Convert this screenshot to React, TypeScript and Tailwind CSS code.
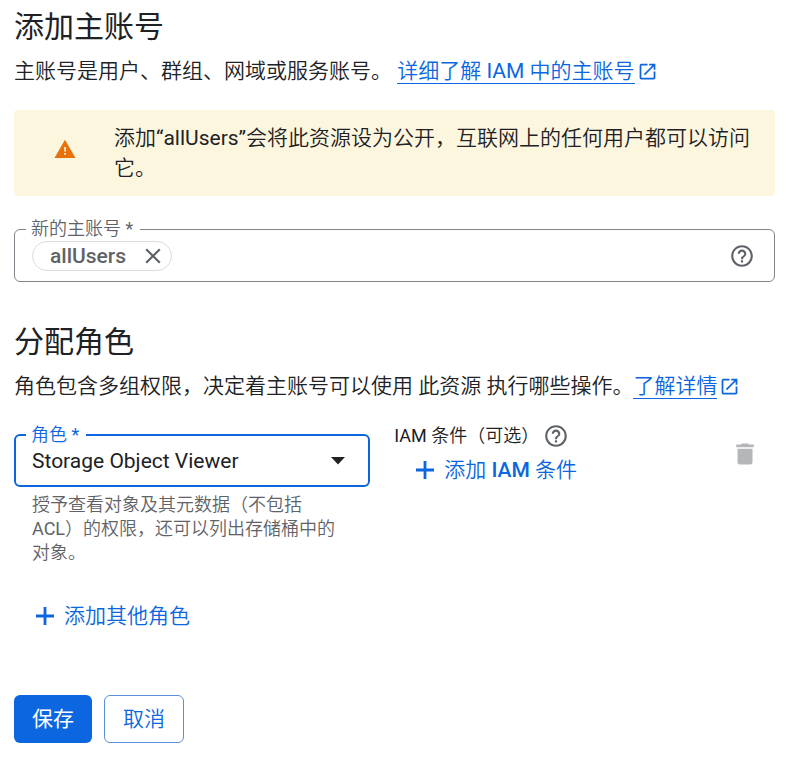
import { useState } from "react"
import { MdClose, MdHelpOutline, MdOpenInNew } from "react-icons/md"

function PlusIcon() {
  return (
    <svg width="18" height="18" viewBox="0 0 18 18" fill="currentColor" aria-hidden="true">
      <path d="M7.6 0h2.8v7.6H18v2.8h-7.6V18H7.6v-7.6H0V7.6h7.6z" />
    </svg>
  )
}

function TrashIcon() {
  return (
    <svg width="18" height="22" viewBox="0 0 18 22" fill="currentColor" aria-hidden="true">
      <path d="M6 .5h6l1 1h4.8v2.7H.2V1.500H5z" />
      <path d="M1.500 5.700h15v13.300a2.500 2.500 0 0 1-2.500 2.500H4a2.500 2.500 0 0 1-2.500-2.500z" />
    </svg>
  )
}

function WarningIcon() {
  return (
    <svg width="22" height="20" viewBox="0 0 22 20" aria-hidden="true">
      <path d="M11 .8 21.500 19H.5z" fill="#e8710a" />
      <path d="M10.200 8h1.700v4.500h-1.700zM10.200 14h1.700v1.700h-1.700z" fill="#fef7e0" />
    </svg>
  )
}

function DocLink({ children }: { children: string }) {
  return (
    <a href="#" className="inline-flex items-center gap-0.5 text-[#0b66e0]">
      <span className="border-b border-current leading-6">{children}</span>
      <MdOpenInNew size={21} />
    </a>
  )
}

export default function App() {
  const [members, setMembers] = useState(["allUsers"])

  return (
    <main className="bg-white pt-[9px] pb-4 pl-3.5 pr-4 font-['Roboto','Noto_Sans_CJK_SC_DemiLight','Noto_Sans_CJK_SC',sans-serif] text-[21px] leading-[30px] text-[#202124]">
      <form onSubmit={(e) => e.preventDefault()}>
        <h1 className="font-['Roboto','Noto_Sans_CJK_SC',sans-serif] text-[30px] leading-9">添加主账号</h1>
        <p className="mt-[11px]">
          主账号是用户、群组、网域或服务账号。 <DocLink>详细了解 IAM 中的主账号</DocLink>
        </p>

        <div role="alert" className="mt-6 flex rounded bg-[#fdf6df] py-[13px] pl-10 pr-6">
          <div className="w-[60px] shrink-0 pt-4">
            <WarningIcon />
          </div>
          <p>添加“allUsers”会将此资源设为公开，互联网上的任何用户都可以访问它。</p>
        </div>

        {/* Principals */}
        <fieldset className="mt-6 rounded-md border border-[#80868b] px-[11px] pb-[10px]">
          <legend className="pl-[5px] pr-[7px] text-[18px] leading-none text-[#5f6368]">
            <label htmlFor="members">新的主账号 *</label>
          </legend>
          <div className="flex items-center gap-2 pt-[3px] pl-[6px] pr-2">
            {members.map((name) => (
              <span key={name} className="flex h-[30px] items-center gap-3.5 rounded-full border border-[#dadce0] pl-[17px] pr-[5px] font-medium text-[#5f6368]">
                {name}
                <button type="button" aria-label={`移除 ${name}`} onClick={() => setMembers(members.filter((m) => m !== name))}>
                  <MdClose size={26} />
                </button>
              </span>
            ))}
            <input id="members" className="h-[30px] min-w-0 flex-1 outline-none" />
            <button type="button" aria-label="帮助" className="text-[#5f6368]">
              <MdHelpOutline size={26} />
            </button>
          </div>
        </fieldset>

        <h2 className="mt-[42px] font-['Roboto','Noto_Sans_CJK_SC',sans-serif] text-[30px] leading-9">分配角色</h2>
        <p className="mt-[11px]">
          角色包含多组权限，决定着主账号可以使用 此资源 执行哪些操作。<DocLink>了解详情</DocLink>
        </p>

        <div className="mt-[25px] grid grid-cols-[15fr_13fr_auto] gap-x-6">
          <div>
            <fieldset className="rounded-md border-2 border-[#0b66e0] px-[10px] pb-[7px]">
              <legend className="pl-[5px] pr-[7px] text-[18px] leading-none text-[#0b66e0]">
                <label htmlFor="role">角色 *</label>
              </legend>
              <div className="grid items-center">
                <select id="role" className="col-start-1 row-start-1 h-[34px] w-full appearance-none bg-transparent px-[6px] outline-none">
                  <option>Storage Object Viewer</option>
                </select>
                <svg width="16" height="8" viewBox="0 0 16 8" className="pointer-events-none col-start-1 row-start-1 mr-3 justify-self-end" aria-hidden="true">
                  <path d="M1 0h14L8 7.500z" fill="#202124" />
                </svg>
              </div>
            </fieldset>
            <p className="mt-[6px] pl-[18px] pr-6 text-[18px] leading-6 text-[#5f6368]">
              授予查看对象及其元数据（不包括 ACL）的权限，还可以列出存储桶中的对象。
            </p>
          </div>

          <div>
            <div className="flex h-5 items-center text-[18px]">
              <span>IAM 条件（可选）</span>
              <button type="button" aria-label="帮助" className="ml-1 text-[#5f6368]">
                <MdHelpOutline size={26} />
              </button>
            </div>
            <button type="button" className="mt-[9px] ml-[22px] flex items-center gap-[10px] text-[#0b66e0]">
              <PlusIcon />
              <span>
                添加 <span className="font-medium">IAM</span> 条件
              </span>
            </button>
          </div>

          <button type="button" aria-label="删除角色" className="mt-2.5 mr-3 flex h-9 w-9 items-center justify-center text-[#b4b6b9]">
            <TrashIcon />
          </button>
        </div>

        <button type="button" className="mt-9 ml-[22px] flex items-center gap-[10px] text-[#0b66e0]">
          <PlusIcon />
          添加其他角色
        </button>

        <div className="mt-16 flex gap-3">
          <button type="submit" className="h-12 rounded-md bg-[#0b66e0] px-[18px] font-['Roboto','Noto_Sans_CJK_SC',sans-serif] text-white">
            保存
          </button>
          <button type="button" className="h-12 rounded-md border border-[#5b8fd9] px-[18px] text-[#0b66e0]">
            取消
          </button>
        </div>
      </form>
    </main>
  )
}
